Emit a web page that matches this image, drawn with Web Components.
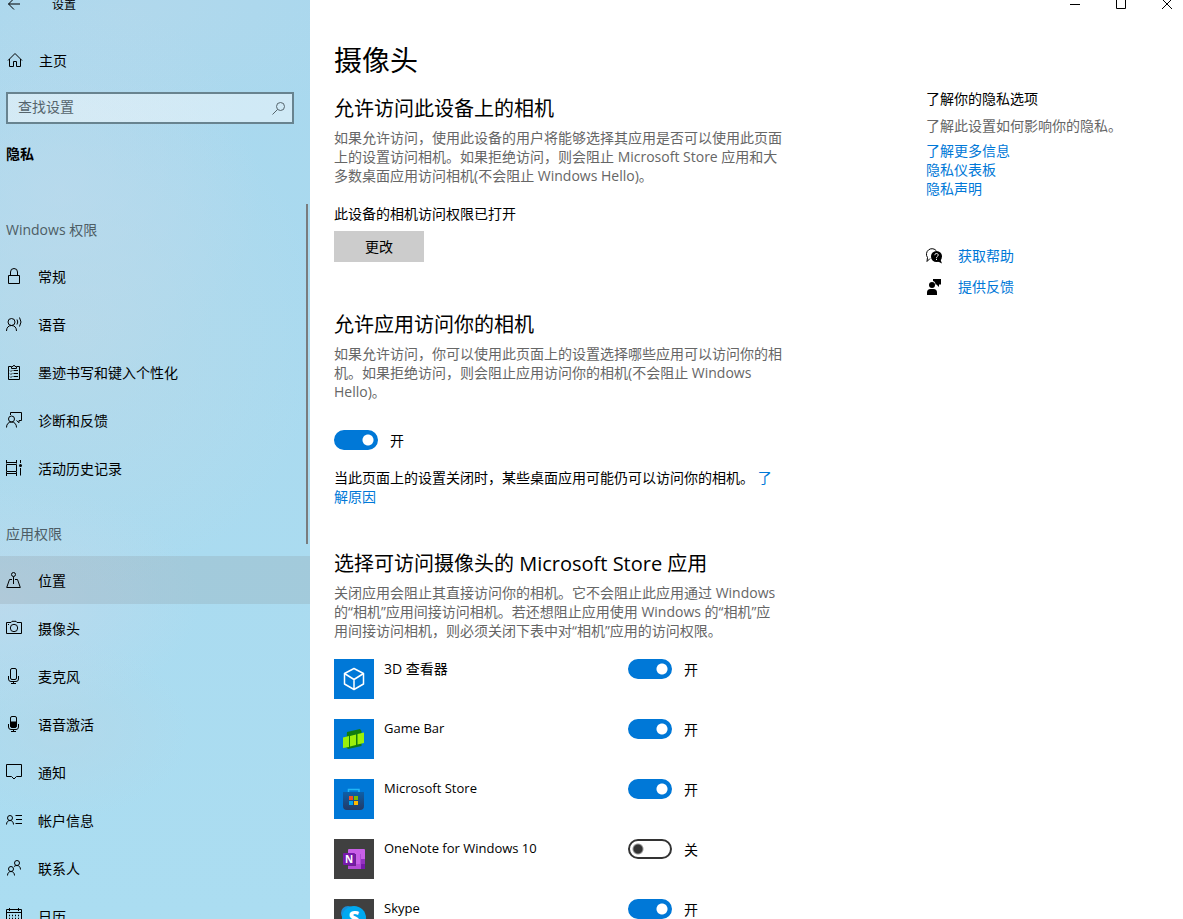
<!DOCTYPE html>
<html lang="zh-CN">
<head>
<meta charset="utf-8">
<meta name="viewport" content="width=device-width, initial-scale=1">
<title>设置</title>
<style>
  html, body { margin: 0; height: 100%; }
  body {
    overflow: hidden; background: #fff; color: #000;
    font: 14px/19px "Open Sans", "Noto Sans CJK SC", sans-serif;
    --accent: #0078d7; --muted: #666;
  }
</style>
</head>
<body>
<settings-window>
  <settings-sidebar slot="sidebar">
    <nav-group label="Windows 权限">
      <nav-item icon="lock">常规</nav-item>
      <nav-item icon="speech">语音</nav-item>
      <nav-item icon="clipboard">墨迹书写和键入个性化</nav-item>
      <nav-item icon="feedback">诊断和反馈</nav-item>
      <nav-item icon="history">活动历史记录</nav-item>
    </nav-group>
    <nav-group label="应用权限">
      <nav-item icon="location" current>位置</nav-item>
      <nav-item icon="camera">摄像头</nav-item>
      <nav-item icon="mic">麦克风</nav-item>
      <nav-item icon="micfill">语音激活</nav-item>
      <nav-item icon="notify">通知</nav-item>
      <nav-item icon="account">帐户信息</nav-item>
      <nav-item icon="contacts">联系人</nav-item>
      <nav-item icon="calendar">日历</nav-item>
    </nav-group>
  </settings-sidebar>
  <camera-page></camera-page>
  <privacy-aside slot="aside"></privacy-aside>
</settings-window>

<script>
const ICONS = {
  back: '<path d="M14 8H2.500M8 2.500 2.500 8 8 13.500"/>',
  home: '<path d="M2 8.500 9 1.500 16 8.500M3.500 7V14.500H7.500V9.500H10.500V14.500H14.500V7"/>',
  lock: '<path d="M2.500 7.500h11v8h-11zM4.500 7V4a3.500 3.500 0 0 1 7 0v3"/>',
  speech: '<circle cx="5.500" cy="6" r="3.500"/><path d="M.5 15c0-3.500 2-5.500 5-5.500s5 2 5 5.500M11 3.500q1.500 2.500 0 5M13.500 1.500q3 4.500 0 9"/>',
  clipboard: '<path d="M5 2.500H2.500v13h11v-13H11M5.500 4.500v-2H7Q8-.5 9 2.500h1.500v2zM7.500 6.500H12M7.500 9.500H12M7.500 12.500H12"/><path d="m4 6.500 1 1 1.500-1.500M4 9.500l1 1L6.500 9M4 12.500l1 1L6.500 12" stroke-width=".8"/>',
  feedback: '<circle cx="5.500" cy="7" r="3"/><path d="M.5 15.500c0-3.500 2-5.500 5-5.500s5 2 5 5.500M4.500 3V.5h11v8H13v2.200L10.500 8.500"/>',
  history: '<path d="M.5 0v3.500M10.500 0v3.500M0 2.500h11M.5 4.500v7h10v-7zM.5 12v4M10.500 12v4M0 13.500h11M14.500 0v3M14.500 8v7.500"/><circle cx="14.500" cy="5.500" r="1.500" fill="currentColor" stroke="none"/>',
  location: '<circle cx="7.500" cy="2.500" r="2"/><path d="M7.500 4.500V12M6 7.500H3.500L.7 15.500h13.600L11.500 7.500H9"/>',
  camera: '<path d="M.5 2.500H5l1-1.200h4l1 1.200h4.500v11H.5z"/><circle cx="8" cy="8" r="3.700"/><path d="M2 4.500h1"/>',
  mic: '<rect x="4.500" y=".5" width="6" height="11" rx="1.500"/><path d="M2.500 8v3q0 2.500 2.500 2.500h5q2.500 0 2.500-2.500V8M7.500 13.500v2M5 15.500h5"/>',
  micfill: '<rect x="4.500" y=".5" width="6" height="11" rx="1.500"/><path d="M5 6h5v5H5z" fill="currentColor"/><path d="M2.500 8v3q0 2.500 2.500 2.500h5q2.500 0 2.500-2.500V8M7.500 13.500v2M5 15.500h5"/>',
  notify: '<path d="M.5.5h15v12H10.500l-2.500 2.500-2.500-2.500H.5z"/>',
  account: '<circle cx="4" cy="6" r="2.500"/><path d="M.5 12.500C.5 10 2 8.500 4 8.500s3.500 1.500 3.500 4M9.500 3.500h6.500M10 7.500h6M9.500 11.500h6.500"/>',
  contacts: '<circle cx="11" cy="3" r="2.500"/><circle cx="5" cy="9" r="2.500"/><path d="M1.500 15.500c0-2.500 1.500-4 3.500-4s3.500 1.500 3.500 4M8 6.500q1-1 3-1c2 0 3.500 1.500 3.500 4"/>',
  calendar: '<path d="M.5 1.500h15v14H.5zM.5 4.500h15M3.500 0v3M12.500 0v3"/><path d="M3 7.500h11M3 10.500h11M3 13.500h11" stroke-dasharray="1 2" stroke-width="1.500"/>',
  search: '<circle cx="10.500" cy="6.500" r="4"/><path d="m7.500 9.500-5 5"/>',
  min: '<path d="M3 8.500h10"/>',
  max: '<path d="M3.500 3.500h9v9h-9z"/>',
  close: '<path d="m3 3 10 10M13 3 3 13"/>',
  help: '<path d="M4 10.500 1 13.500 1.500 9.500A5 5 0 1 1 10.500 3"/><circle cx="10.500" cy="8.500" r="5.500" fill="currentColor" stroke="none"/><path d="m11 13 5 2.500-2-5z" fill="currentColor" stroke="none"/><path d="M8.800 7.200c0-2.400 3.600-2.200 3.400 0-.1 1.200-1.700 1.200-1.700 2.600M10.500 10.800v1.200" stroke="#fff"/>',
  person: '<g fill="currentColor" stroke="none"><circle cx="6" cy="6" r="3"/><path d="M1 16v-2.500Q1 10 4.500 10h3q3.500 0 3.500 3.500V16zM7 0h8v5.500h-2V8l-2.500-2.500H9.500Q9.500 2.500 7 2z"/></g>'
};
const TILES = {
  cube: '<rect width="40" height="40" fill="#0078d7"/><path d="m20 9.500 9.500 5v10.500L20 30.500 10.500 25V14.500zM10.500 14.500l9.500 6 9.500-6M20 20.500v10" fill="none" stroke="#fff" stroke-width="1.500" stroke-linejoin="round"/>',
  game: '<rect width="40" height="40" fill="#0078d7"/><path d="m13 13 13-3 1.500 2v15L14 30l-2-2z" fill="#107c10"/><path d="m9 18.500 6-1.500v11l-6 1zM16 17l6-1.500V26l-6 1.500zM23.500 15l6.500-1.500V24l-6.500 1.500z" fill="#9bf00b"/>',
  store: '<defs><linearGradient id="g" x2="0" y2="1"><stop stop-color="#0d5fa8"/><stop offset="1" stop-color="#233a66"/></linearGradient></defs><rect width="40" height="40" fill="#0078d7"/><path d="M14.500 14v-3.500h10.500V14" fill="none" stroke="#21b7f5" stroke-width="1.500"/><path d="M9 13h21v14q0 4-4 4H13q-4 0-4-4z" fill="url(#g)"/><path d="M15 17h4v4h-4z" fill="#f25022"/><path d="M20 17h4v4h-4z" fill="#7fba00"/><path d="M15 22h4v4h-4z" fill="#00a4ef"/><path d="M20 22h4v4h-4z" fill="#ffb900"/>',
  onenote: '<rect width="40" height="40" fill="#404040"/><rect x="14" y="10" width="17" height="20" rx="1" fill="#c960e8"/><path d="M26 20h5v5h-5z" fill="#9332bf"/><path d="M26 25h5v5h-5z" fill="#7719aa"/><path d="M26 15h1v15h-1z" fill="#ae4bd5"/><path d="M14 25h12v5H14z" fill="#b54bd8"/><rect x="14" y="15" width="8" height="12" fill="#6d2490"/><rect x="9" y="14" width="12" height="12" rx="1" fill="#7719aa"/><text x="15" y="24" text-anchor="middle" font-family="Open Sans, sans-serif" font-weight="700" font-size="10" fill="#fff">N</text>',
  skype: '<rect width="40" height="40" fill="#404040"/><circle cx="14" cy="14" r="7" fill="#1a8fd8"/><circle cx="26" cy="26" r="7" fill="#0078d4"/><circle cx="20" cy="19" r="12" fill="#00a9f0"/><text x="20" y="26" text-anchor="middle" font-family="Open Sans, sans-serif" font-weight="800" font-size="19" fill="#fff">S</text>'
};
const icon = n => `<svg class="icon" width="16" height="16" viewBox="0 0 16 16" fill="none" stroke="currentColor" aria-hidden="true">${ICONS[n]}</svg>`;
const BASE = '*{box-sizing:border-box}.icon{display:block;flex:none;overflow:visible}a{text-decoration:none}button,input{font:inherit;color:inherit}';

/* Registers an element whose open shadow root is filled from its render function. */
const define = (name, css, render) => customElements.define(name, class extends HTMLElement {
  connectedCallback() {
    if (this.shadowRoot) return;
    this.attachShadow({ mode: 'open' }).innerHTML = `<style>${BASE}${css}</style>${render(this)}`;
  }
});

define('settings-window', `
  :host { display: grid; grid-template-columns: 310px minmax(0, 1fr); height: 100vh; overflow: hidden; }
  .main { min-width: 0; overflow: hidden; }
  .caption { display: flex; justify-content: flex-end; gap: 30px; height: 24px; margin-top: -8px; padding-right: 8px; }
  .caption button { display: grid; place-items: center; width: 16px; padding: 0; border: 0; background: none; }
  .columns { display: flex; padding-left: 24px; }
  .page { flex: 1; min-width: 0; }
  .aside { flex: none; width: 257px; padding-top: 73px; }
`, () => `
  <slot name="sidebar"></slot>
  <div class="main">
    <div class="caption">
      <button aria-label="最小化">${icon('min')}</button>
      <button aria-label="最大化">${icon('max')}</button>
      <button aria-label="关闭">${icon('close')}</button>
    </div>
    <div class="columns"><main class="page"><slot></slot></main><aside class="aside"><slot name="aside"></slot></aside></div>
  </div>`);

define('settings-sidebar', `
  :host { display: flex; flex-direction: column; min-height: 0; overflow: hidden;
    background:
      radial-gradient(ellipse 200px 200px at 60px 190px, #bddaec99, #bddaec00),
      radial-gradient(ellipse 260px 120px at 130px 10px, #b6d8eb99, #b6d8eb00),
      radial-gradient(ellipse 240px 260px at 80px 330px, #bad9e8b3, #bad9e800),
      radial-gradient(ellipse 200px 120px at 0 600px, #c2d9ebb3, #c2d9eb00),
      radial-gradient(ellipse 130px 90px at 60px 730px, #b6d6e699, #b6d6e600),
      linear-gradient(#a9d8ee, #abddf1); }
  header { display: flex; align-items: center; gap: 30px; height: 24px; margin-top: -8px; padding-left: 6px; font-size: 12px; }
  header button { padding: 0; border: 0; background: none; }
  .home { display: flex; align-items: center; gap: 17px; height: 48px; margin-top: 20px; padding-left: 6px; color: inherit; }
  .search { display: flex; align-items: center; height: 32px; margin: 8px 16px 0 6px; padding: 0 6px 0 10px;
    border: 2px solid #68838f; background: #ffffff73; color: #55646c; }
  input { flex: 1; min-width: 0; height: 26px; padding: 0 0 4px; border: 0; outline: 0; background: none; }
  input::placeholder { color: #55646c; opacity: 1; }
  h1 { flex: none; margin: 20px 0 0; padding-left: 6px; font-size: 14px; line-height: 20px; font-weight: 700; }
  nav { position: relative; flex: 1; min-height: 0; margin-top: 24px; overflow: hidden; }
  .thumb { position: absolute; right: 2px; top: 16px; width: 2px; height: 340px; background: #797c7e; }
`, () => `
  <header><button aria-label="后退">${icon('back')}</button><span>设置</span></header>
  <a class="home" href="#home">${icon('home')}<span>主页</span></a>
  <div class="search"><input type="text" placeholder="查找设置" aria-label="查找设置">${icon('search')}</div>
  <h1>隐私</h1>
  <nav><slot></slot><div class="thumb"></div></nav>`);

define('nav-group', `
  :host { display: block; }
  h2 { height: 64px; margin: 0; padding: 20px 0 0 6px; line-height: 44px; font-size: 14px; font-weight: 400; color: #4d5d65; }
`, el => `<h2>${el.getAttribute('label')}</h2><slot></slot>`);

define('nav-item', `
  :host { display: block; }
  :host([current]) a { background: #8080802e; }
  a { display: flex; align-items: center; gap: 16px; height: 48px; padding-left: 6px; color: inherit; }
`, el => `<a href="#${el.getAttribute('icon')}">${icon(el.getAttribute('icon'))}<span><slot></slot></span></a>`);

define('toggle-switch', `
  :host { display: block; }
  label { display: flex; align-items: center; gap: 12px; height: 20px; }
  input { appearance: none; flex: none; width: 44px; height: 20px; margin: 0; border: 2px solid #333; border-radius: 10px;
    background: radial-gradient(circle at 8px 8px, #333 4px, #3330 6px); }
  input:checked { border-color: var(--accent); background: radial-gradient(circle at 32px 8px, #fff 5px, #fff0 6px) var(--accent); background-origin: padding-box; }
`, el => {
  const on = el.hasAttribute('on');
  return `<label><input type="checkbox" role="switch" aria-label="${el.getAttribute('name')}"${on ? ' checked' : ''}><span>${on ? '开' : '关'}</span></label>`;
});

define('app-row', `
  :host { display: grid; grid-template-columns: 40px 234px auto; column-gap: 10px; align-items: start; height: 60px; }
  :host([lang="en"]) .name { font-size: 13px; }
  svg { display: block; }
`, el => `<svg width="40" height="40" viewBox="0 0 40 40" aria-hidden="true">${TILES[el.getAttribute('tile')]}</svg>
  <span class="name"><slot></slot></span><toggle-switch name="${el.textContent}"${el.hasAttribute('on') ? ' on' : ''}></toggle-switch>`);

define('setting-section', `
  :host { display: block; max-width: 450px; }
  h2 { margin: 0; font-size: 20px; line-height: 28px; font-weight: 400; }
  p { margin: 5px 0 0; color: var(--muted); }
`, el => `<h2>${el.getAttribute('heading')}</h2><p><slot name="description"></slot></p><slot></slot>`);

define('camera-page', `
  :host { display: block; }
  h1 { margin: 24px 0 0; font-size: 28px; line-height: 40px; font-weight: 400; }
  setting-section { margin-bottom: 44px; }
  .device { margin: 15px 0 49px; }
  .status { margin: 19px 0 0; }
  .change { display: block; width: 90px; height: 31px; margin-top: 8px; padding: 0; border: 0; background: #ccc; }
  .all { margin-top: 29px; }
  .note { margin: 18px 0 0; }
  a { color: var(--accent); }
  .apps { margin-top: 19px; }
`, () => `
  <h1>摄像头</h1>
  <setting-section class="device" heading="允许访问此设备上的相机">
    <span slot="description">如果允许访问，使用此设备的用户将能够选择其应用是否可以使用此页面上的设置访问相机。如果拒绝访问，则会阻止 Microsoft Store 应用和大多数桌面应用访问相机(不会阻止 Windows Hello)。</span>
    <p class="status">此设备的相机访问权限已打开</p>
    <button class="change">更改</button>
  </setting-section>
  <setting-section heading="允许应用访问你的相机">
    <span slot="description">如果允许访问，你可以使用此页面上的设置选择哪些应用可以访问你的相机。如果拒绝访问，则会阻止应用访问你的相机(不会阻止 Windows Hello)。</span>
    <toggle-switch class="all" name="允许应用访问你的相机" on></toggle-switch>
    <p class="note">当此页面上的设置关闭时，某些桌面应用可能仍可以访问你的相机。 <a href="#why">了解原因</a></p>
  </setting-section>
  <setting-section heading="选择可访问摄像头的 Microsoft Store 应用">
    <span slot="description">关闭应用会阻止其直接访问你的相机。它不会阻止此应用通过 Windows 的“相机”应用间接访问相机。若还想阻止应用使用 Windows 的“相机”应用间接访问相机，则必须关闭下表中对“相机”应用的访问权限。</span>
    <div class="apps">
      <app-row tile="cube" on>3D 查看器</app-row>
      <app-row tile="game" lang="en" on>Game Bar</app-row>
      <app-row tile="store" lang="en" on>Microsoft Store</app-row>
      <app-row tile="onenote" lang="en">OneNote for Windows 10</app-row>
      <app-row tile="skype" lang="en" on>Skype</app-row>
    </div>
  </setting-section>`);

define('privacy-aside', `
  :host { display: block; }
  h2 { margin: 0; font-size: 14px; line-height: 20px; font-weight: 400; }
  p { margin: 7px 0 0; color: var(--muted); }
  a { color: var(--accent); }
  .links { display: grid; justify-items: start; margin-top: 6px; }
  .support { display: grid; gap: 12px; margin-top: 48px; }
  .support a { display: flex; align-items: center; gap: 16px; }
  .icon { color: #000; }
`, () => `
  <h2>了解你的隐私选项</h2>
  <p>了解此设置如何影响你的隐私。</p>
  <div class="links"><a href="#more">了解更多信息</a><a href="#dashboard">隐私仪表板</a><a href="#statement">隐私声明</a></div>
  <div class="support"><a href="#help">${icon('help')}<span>获取帮助</span></a><a href="#feedback">${icon('person')}<span>提供反馈</span></a></div>`);
</script>
</body>
</html>
